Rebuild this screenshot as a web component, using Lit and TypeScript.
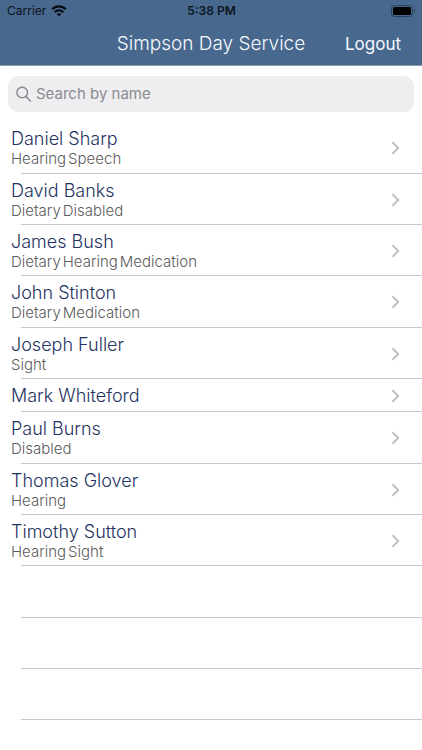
import { LitElement, html, css, nothing } from "lit";
import { customElement, property, state } from "lit/decorators.js";

interface Person {
  name: string;
  needs: string[];
}

const PEOPLE: Person[] = [
  { name: "Daniel Sharp", needs: ["Hearing", "Speech"] },
  { name: "David Banks", needs: ["Dietary", "Disabled"] },
  { name: "James Bush", needs: ["Dietary", "Hearing", "Medication"] },
  { name: "John Stinton", needs: ["Dietary", "Medication"] },
  { name: "Joseph Fuller", needs: ["Sight"] },
  { name: "Mark Whiteford", needs: [] },
  { name: "Paul Burns", needs: ["Disabled"] },
  { name: "Thomas Glover", needs: ["Hearing"] },
  { name: "Timothy Sutton", needs: ["Hearing", "Sight"] },
];

const EMPTY_ROWS = 3;

@customElement("status-bar")
export class StatusBar extends LitElement {
  static styles = css`
    :host {
      display: grid;
      grid-template-columns: 1fr auto 1fr;
      align-items: center;
      height: 22px;
      padding: 0 6px 0 7px;
      color: #0b1420;
      font-size: 12px;
      line-height: 16px;
    }
    .carrier {
      display: flex;
      align-items: center;
      gap: 5px;
    }
    .time {
      font-weight: 600;
    }
    .battery {
      justify-self: end;
    }
    svg {
      display: block;
    }
  `;

  render() {
    return html`
      <div class="carrier">
        <span>Carrier</span>
        <svg width="16" height="12" viewBox="0 0 16 12" fill="none" stroke="#050a12" stroke-width="2.2">
          <path d="M1.2 4.3C5 .5 11 .5 14.8 4.3" />
          <path d="M3.8 7.2C6.2 4.8 9.8 4.8 12.2 7.2" />
          <path d="M8 11.6 5.7 9.1C7 7.9 9 7.9 10.3 9.1Z" fill="#050a12" stroke="none" />
        </svg>
      </div>
      <div class="time">5:38 PM</div>
      <svg class="battery" width="25" height="12" viewBox="0 0 25 12">
        <rect x=".5" y=".5" width="21" height="11" rx="3" fill="none" stroke="#2a405c" />
        <rect x="2" y="2" width="18" height="8" rx="1.6" fill="#000" />
        <path d="M23 4c1.6.6 1.6 3.4 0 4Z" fill="#2a405c" />
      </svg>
    `;
  }
}

@customElement("person-row")
export class PersonRow extends LitElement {
  @property({ attribute: false }) person!: Person;

  static styles = css`
    :host {
      display: block;
    }
    .row {
      display: flex;
      align-items: center;
      justify-content: space-between;
      width: 100%;
      padding: 5px 22px 4px 11px;
      border: 0;
      background: none;
      font: inherit;
      text-align: left;
      cursor: pointer;
    }
    .text {
      display: flex;
      flex-direction: column;
      font-weight: 300;
    }
    .name {
      color: #1f3462;
      font-size: 18px;
      line-height: 23px;
    }
    .needs {
      display: flex;
      gap: 2px;
      color: #5c5c5c;
      font-size: 15px;
      line-height: 18px;
    }
    svg {
      display: block;
    }
  `;

  render() {
    const { name, needs } = this.person;
    return html`
      <button class="row" type="button">
        <span class="text">
          <span class="name">${name}</span>
          ${needs.length
            ? html`<span class="needs">${needs.map((n) => html`<span>${n}</span>`)}</span>`
            : nothing}
        </span>
        <svg width="9" height="14" viewBox="0 0 9 14" fill="none" stroke="#c0c0c3" stroke-width="2">
          <path d="M1.5 1.3 7.2 7 1.5 12.7" />
        </svg>
      </button>
    `;
  }
}

@customElement("app-root")
export class AppRoot extends LitElement {
  @state() private query = "";

  static styles = css`
    :host {
      display: block;
      min-height: 100vh;
      background: #fff;
      font-family: Inter, "Liberation Sans", sans-serif;
    }
    header {
      background: #48688e;
      border-bottom: 1px solid #8b9cb3;
    }
    .nav {
      display: grid;
      grid-template-columns: 1fr auto 1fr;
      align-items: center;
      height: 43px;
      padding: 0 21px;
      color: #f4f8fd;
    }
    h1 {
      grid-column: 2;
      margin: 0;
      font-size: 19px;
      font-weight: 300;
      line-height: 24px;
    }
    .logout {
      justify-self: end;
      padding: 0;
      border: 0;
      background: none;
      color: inherit;
      font: inherit;
      font-size: 17px;
      line-height: 24px;
      cursor: pointer;
    }
    .search {
      display: flex;
      align-items: center;
      gap: 5px;
      height: 36px;
      margin: 10px 8px;
      padding: 0 8px;
      border-radius: 10px;
      background: #eeeef0;
    }
    .search svg {
      flex: none;
    }
    input {
      flex: 1;
      min-width: 0;
      padding: 0;
      border: 0;
      outline: 0;
      background: none;
      color: #222;
      font: inherit;
      font-size: 15px;
      line-height: 20px;
    }
    input::placeholder {
      color: #8b8b90;
      opacity: 1;
    }
    ul {
      margin: 0;
      padding: 0;
      list-style: none;
    }
    li::after {
      content: "";
      display: block;
      height: 1px;
      margin-left: 21px;
      background: #c8c8ca;
    }
    li:nth-child(3n + 1)::after {
      margin-top: 1px;
    }
    .empty {
      padding-top: 50px;
    }
  `;

  private onInput(e: Event) {
    this.query = (e.target as HTMLInputElement).value;
  }

  render() {
    const q = this.query.trim().toLowerCase();
    const people = PEOPLE.filter((p) => p.name.toLowerCase().includes(q));
    return html`
      <header>
        <status-bar></status-bar>
        <div class="nav">
          <h1>Simpson Day Service</h1>
          <button class="logout" type="button">Logout</button>
        </div>
      </header>
      <main>
        <label class="search">
          <svg width="15" height="16" viewBox="0 0 15 16" fill="none" stroke="#85858a" stroke-width="1.4">
            <circle cx="6.2" cy="6.6" r="5.3" />
            <path d="m10 10.5 4.4 4.4" stroke-linecap="round" />
          </svg>
          <input
            type="text"
            placeholder="Search by name"
            aria-label="Search by name"
            .value=${this.query}
            @input=${this.onInput}
          />
        </label>
        <ul>
          ${people.map((p) => html`<li><person-row .person=${p}></person-row></li>`)}
          ${Array.from({ length: EMPTY_ROWS }, () => html`<li class="empty" aria-hidden="true"></li>`)}
        </ul>
      </main>
    `;
  }
}
